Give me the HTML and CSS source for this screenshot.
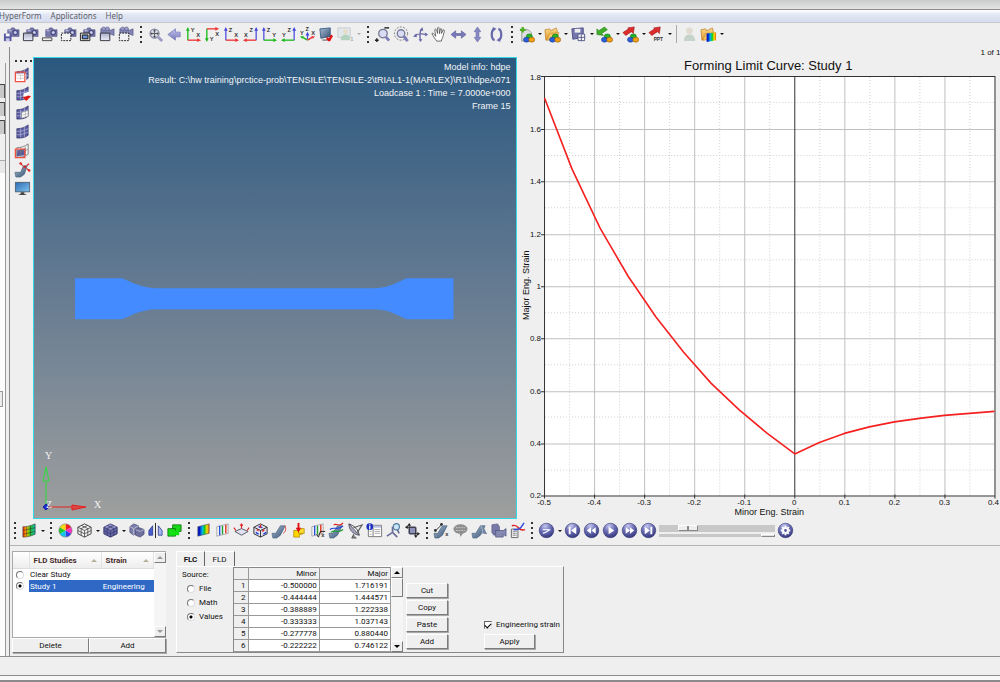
FILE: index.html
```html
<!DOCTYPE html>
<html lang="en">
<head>
<meta charset="utf-8">
<title>HyperForm</title>
<link rel="stylesheet" href="styles.css">
</head>
<body>
<svg class="sprite" aria-hidden="true">
  <defs>
    <linearGradient id="g-violet" x1="0" y1="0" x2="0" y2="1"><stop offset="0" stop-color="#c3c5ea"/><stop offset="1" stop-color="#7678bb"/></linearGradient>
    <linearGradient id="g-steel" x1="0" y1="0" x2="1" y2="1"><stop offset="0" stop-color="#a9bdd6"/><stop offset="1" stop-color="#34506f"/></linearGradient>
    <linearGradient id="g-screen" x1="0" y1="0" x2="1" y2="1"><stop offset="0" stop-color="#2f6fb4"/><stop offset="1" stop-color="#7cc0ee"/></linearGradient>
    <linearGradient id="g-rain" x1="0" y1="0" x2="1" y2="0"><stop offset=".15" stop-color="#0018c8"/><stop offset=".4" stop-color="#00b8e8"/><stop offset=".6" stop-color="#18c820"/><stop offset=".8" stop-color="#f8e000"/><stop offset="1" stop-color="#f06000"/></linearGradient>
    <linearGradient id="g-warm" x1="0" y1="0" x2="1" y2="0"><stop offset="0" stop-color="#f02000"/><stop offset=".3" stop-color="#f8c000"/><stop offset=".6" stop-color="#28c820"/><stop offset="1" stop-color="#10b8b0"/></linearGradient>
    <radialGradient id="g-ball" cx=".4" cy=".2" r=".8"><stop offset="0" stop-color="#c4c7ef"/><stop offset=".5" stop-color="#6c6fb4"/><stop offset="1" stop-color="#34377e"/></radialGradient>
    <linearGradient id="g-folder" x1="0" y1="0" x2="0" y2="1"><stop offset="0" stop-color="#fbd98a"/><stop offset="1" stop-color="#e09a2c"/></linearGradient>
    <linearGradient id="g-pane" x1="0" y1="0" x2="0" y2="1"><stop offset="0" stop-color="#a9aec6"/><stop offset="1" stop-color="#eceefa"/></linearGradient>
  </defs>
  <symbol id="cam" viewBox="0 0 18 18"><path d="M5 4h3l1-2h3l1 2h4v7H5z" fill="#7779ab" stroke="#4c4d80" stroke-width=".6"/><circle cx="13" cy="7" r="3" fill="#4b4c82"/><circle cx="13" cy="7" r="1.6" fill="#c9cbea"/><path d="M6 5h3" stroke="#d4d5ee"/></symbol>
  <symbol id="vid" viewBox="0 0 18 18"><path d="M3 3h9v2l5-2v7l-5-2v3H3z" fill="#8284b2" stroke="#55578a" stroke-width=".7"/><circle cx="6" cy="3" r="2" fill="#9a9cc6" stroke="#55578a" stroke-width=".6"/><circle cx="10" cy="3" r="2" fill="#9a9cc6" stroke="#55578a" stroke-width=".6"/></symbol>
  <symbol id="cam-save" viewBox="0 0 18 18"><use href="#cam"/><path d="M1 8h8v8H1z" fill="#5557a0"/><path d="M3 8h4v3H3z" fill="#fff"/><path d="M3 13h4v3H3z" fill="#c8c9e6"/></symbol>
  <symbol id="cam-win" viewBox="0 0 18 18"><use href="#cam"/><path d="M1.500 7.500h10v8h-10z" fill="url(#g-pane)" stroke="#33343f"/></symbol>
  <symbol id="cam-bar" viewBox="0 0 18 18"><use href="#cam"/><path d="M1.500 12.500h10v3h-10z" fill="#eee" stroke="#444"/></symbol>
  <symbol id="cam-dash" viewBox="0 0 18 18"><use href="#cam"/><path d="M1.500 7.500h10v8h-10z" fill="#f2f2f4" stroke="#222" stroke-dasharray="2 1"/></symbol>
  <symbol id="cam-full" viewBox="0 0 18 18"><use href="#cam"/><path d="M1.500 7.500h10v8h-10z" fill="#ddd" stroke="#222"/><path d="M3.500 9.500h6v4h-6z" fill="#6f93d8" stroke="#111"/></symbol>
  <symbol id="vid-win" viewBox="0 0 18 18"><use href="#vid"/><path d="M2.500 7.500h10v8h-10z" fill="url(#g-pane)" stroke="#33343f"/></symbol>
  <symbol id="vid-dash" viewBox="0 0 18 18"><use href="#vid"/><path d="M2.500 7.500h10v8h-10z" fill="#f2f2f4" stroke="#222" stroke-dasharray="2 1"/></symbol>
  <symbol id="lens" viewBox="0 0 18 18"><circle cx="8" cy="8" r="4.700" fill="#dfe0ee" stroke="#8a8ca6" stroke-width="1.500"/><path d="M12 12l4 4" stroke="#9a9bc4" stroke-width="3"/><path d="M5 8h6M8 5v6" stroke="#555"/><path d="M8 3.500l1.500 2h-3zM8 12.500l1.500-2h-3zM3.500 8l2-1.500v3zM12.500 8l-2-1.500v3z" fill="#444"/></symbol>
  <symbol id="back" viewBox="0 0 18 18"><path d="M2 9l8-6v3.500h5v5h-5V15z" fill="url(#g-violet)" stroke="#7779b8" stroke-width=".8"/></symbol>
  <symbol id="view-check" viewBox="0 0 18 18"><path d="M2 3l11-1v9L3 13z" fill="url(#g-steel)" stroke="#274a78" stroke-width=".8"/><path d="M4 14h7l-1 2H5z" fill="#999"/><path d="M9 13c2 0 2 2 3 2 1-2 2-4 3-5" fill="none" stroke="#e01010" stroke-width="2.500"/></symbol>
  <symbol id="photo" viewBox="0 0 18 18"><g opacity=".4"><path d="M1 2h13v10H1z" fill="#cfdde6" stroke="#8a9aa8"/><circle cx="9" cy="6" r="2.500" fill="#e0c080"/><path d="M4 15c0-4 2-6 5-6s5 2 5 6z" fill="#5fae7c"/></g></symbol>
  <symbol id="zoom-out" viewBox="0 0 18 18"><circle cx="9.500" cy="8" r="4.500" fill="#d9dcf2" stroke="#777a96" stroke-width="1.400"/><path d="M12.500 11.500l3.500 4" stroke="#7b7db8" stroke-width="3"/><path d="M11 2h5" stroke="#222" stroke-width="1.500"/><path d="M1 15h4M3 13v4" stroke="#222" stroke-width="1.500"/></symbol>
  <symbol id="zoom-circ" viewBox="0 0 18 18"><circle cx="8.500" cy="8" r="7" fill="none" stroke="#555" stroke-dasharray="2 1.500" stroke-width=".8"/><circle cx="8.500" cy="8" r="4" fill="#d9dcf2" stroke="#777a96" stroke-width="1.400"/><path d="M11.500 11l4 5" stroke="#7b7db8" stroke-width="3"/></symbol>
  <symbol id="rotate3" viewBox="0 0 18 18"><path d="M3 10c4-2 8-2 12-1M10 3c-2 4-2 8-1 12" fill="none" stroke="#686aa8" stroke-width="1.500"/><path d="M1 11l4-3v4zM17 9l-3-2v4zM11 1l1 4H8zM9 17l-2-3h4z" fill="#686aa8"/></symbol>
  <symbol id="hand" viewBox="0 0 18 18"><path d="M6 16c-1-2-4-5-5-8 1-1 2 0 4 3L4 4c1-2 2 0 3 4V2c1-2 2 0 2 6l1-5c1-1 2 0 1 5l2-4c2 0 1 2 0 6s-2 4-2 6z" fill="#fff" stroke="#555" stroke-width=".9"/></symbol>
  <symbol id="arr-h" viewBox="0 0 18 18"><path d="M1 9l5-4v3h6V5l5 4-5 4v-3H6v3z" fill="#7779bb" stroke="#55578f" stroke-width=".6"/></symbol>
  <symbol id="arr-v" viewBox="0 0 18 18"><path d="M9 1l3.500 5h-2v6h2L9 17l-3.500-5h2V6h-2z" fill="#8688c6" stroke="#65679f" stroke-width=".6"/></symbol>
  <symbol id="spin" viewBox="0 0 18 18"><path d="M7 3C3 4 3 14 7 15M11 15c4-1 4-11 0-12" fill="none" stroke="#686aac" stroke-width="2.400"/><path d="M5 1l4 2-4 3zM13 17l-4-2 4-3z" fill="#686aac"/></symbol>
  <symbol id="balls" viewBox="0 0 18 18"><ellipse cx="12" cy="11" rx="3.200" ry="2.600" fill="#25b425" stroke="#0a6a0a" stroke-width=".6"/><ellipse cx="9" cy="14.500" rx="3.200" ry="2.600" fill="#2a5fd8" stroke="#123a90" stroke-width=".6"/><ellipse cx="14.500" cy="14.500" rx="3.200" ry="2.600" fill="#f0a010" stroke="#905008" stroke-width=".6"/></symbol>
  <symbol id="doc-new" viewBox="0 0 18 18"><path d="M4 4h7l3 3v9H4z" fill="#dedede" stroke="#999"/><path d="M5 1v6M2 4h6" stroke="#4fae22" stroke-width="2.400"/><use href="#balls"/></symbol>
  <symbol id="fold" viewBox="0 0 18 18"><path d="M1 4l5-1 1 2 6-3 1 3v8L2 15z" fill="url(#g-folder)" stroke="#b97a1e" stroke-width=".7"/><path d="M3 15l3-7 10-1-3 7z" fill="#f7c766" stroke="#b97a1e" stroke-width=".5"/></symbol>
  <symbol id="fold-balls" viewBox="0 0 18 18"><use href="#fold"/><use href="#balls"/></symbol>
  <symbol id="fold-rain" viewBox="0 0 18 18"><use href="#fold"/><path d="M7 8l10-1v8L7 17z" fill="url(#g-rain)"/></symbol>
  <symbol id="save-grid" viewBox="0 0 18 18"><path d="M2 3l12-1v10L3 14z" fill="#7577ad" stroke="#4c4e86"/><path d="M5 3h6v4H5z" fill="#eee"/><path d="M8.500 8.500h7v7h-7z" fill="#f6f6fb" stroke="#555a88"/><path d="M12 9v7M9 12h7" stroke="#555a88"/></symbol>
  <symbol id="in-balls" viewBox="0 0 18 18"><path d="M1 9V3l2 2 6-4 3 3-6 4 2 2z" fill="#3fae28" stroke="#1c7a10" stroke-width=".6"/><use href="#balls"/></symbol>
  <symbol id="out-arrow" viewBox="0 0 18 18"><path d="M1 7l6-4-1-1 7-1-1 7-2-2-6 4z" fill="#dc2c2c" stroke="#981010" stroke-width=".6"/></symbol>
  <symbol id="out-balls" viewBox="0 0 18 18"><use href="#out-arrow"/><use href="#balls"/></symbol>
  <symbol id="person" viewBox="0 0 18 18"><g opacity=".35"><circle cx="9" cy="5" r="3.500" fill="#c7b49a"/><path d="M3 16c0-5 3-7 6-7s6 2 6 7z" fill="#7ba08a"/></g></symbol>

  <symbol id="sheet" viewBox="0 0 18 18"><path d="M3 6c4 0 8-1 12-4v11c-4 3-8 3-12 3z" fill="#5a5c9e" stroke="#2c2e68" stroke-width=".7"/><path d="M7 6v9M11 4v11M3 9c4 0 8-1 12-3M3 12.500c4 0 8-1 12-3" fill="none" stroke="#b9bae0" stroke-width=".7"/></symbol>
  <symbol id="sheet-box" viewBox="0 0 18 18"><use href="#sheet"/><path d="M2 8h11v8H2z" fill="#fff"/><path d="M1.500 6.500h10v10h-10z" fill="none" stroke="#f05040" stroke-width="1.400"/><path d="M3 10h10M3 13h10M7 8v7" stroke="#c6b4b4" stroke-width=".6"/></symbol>
  <symbol id="sheet-red" viewBox="0 0 18 18"><use href="#sheet"/><path d="M10 9l6-2v5l-6 3z" fill="#fff"/><path d="M9 13l4 4 5-5-3-1-2 1z" fill="#e01818"/></symbol>
  <symbol id="sheet-part" viewBox="0 0 18 18"><use href="#sheet"/><path d="M8 9l7-2v6l-7 2z" fill="#fff" stroke="#888" stroke-width=".6"/><path d="M12 8v6M8 12l7-2" stroke="#999" stroke-width=".6"/></symbol>
  <symbol id="sheet-frame" viewBox="0 0 18 18"><path d="M3 6c4 0 8-1 12-4v11c-4 3-8 3-12 3z" fill="#f2f2f2" stroke="#666" stroke-width=".8"/><path d="M3 9l9-2v7l-9 1z" fill="#5a5c9e"/><path d="M7 6v9M12 5v9M3 11l12-3" stroke="#777" stroke-width=".6"/><path d="M1.500 7.500h10v9h-10z" fill="none" stroke="#f05040" stroke-width="1.400"/></symbol>
  <symbol id="bend-x" viewBox="0 0 18 18"><path d="M1 12h6l3-7h4l-3 9-4 3H2z" fill="url(#g-steel)" stroke="#3c5674" stroke-width=".6"/><path d="M7 3l9 7M16 3l-7 5" stroke="#e02020" stroke-width="1.200" stroke-dasharray="3 1"/><circle cx="7" cy="2.500" r="1.300" fill="#e02020"/><circle cx="16" cy="10" r="1.300" fill="#e02020"/></symbol>
  <symbol id="monitor" viewBox="0 0 18 18"><path d="M1 2h16v11H1z" fill="#5a6a7a"/><path d="M2 3h14v9H2z" fill="url(#g-screen)"/><path d="M7 13h4v2h2v1H5v-1h2z" fill="#444"/></symbol>

  <symbol id="contour" viewBox="0 0 18 18"><path d="M2 5c5 0 8-1 13-3v11c-5 2-8 3-13 3z" fill="url(#g-warm)" stroke="#333" stroke-width=".6"/><path d="M6 5v10M10 4v10M2 9l13-3M2 13l13-3" stroke="#333" stroke-width=".6"/></symbol>
  <symbol id="wheel" viewBox="0 0 18 18"><path d="M9 9V2a7 7 0 0 1 6 3.500z" fill="#f02020"/><path d="M9 9l6-3.500a7 7 0 0 1 0 7z" fill="#ff30c0"/><path d="M9 9l6 3.500A7 7 0 0 1 9 16z" fill="#3040f0"/><path d="M9 9v7a7 7 0 0 1-6-3.500z" fill="#10c8e8"/><path d="M9 9l-6 3.500a7 7 0 0 1 0-7z" fill="#20c830"/><path d="M9 9L3 5.500A7 7 0 0 1 9 2z" fill="#f8d810"/><circle cx="9" cy="9" r="7" fill="none" stroke="#777" stroke-width=".6"/></symbol>
  <symbol id="cube-wire" viewBox="0 0 18 18"><path d="M9 2l7 3.500v7L9 16l-7-3.500v-7z" fill="#eee" stroke="#444"/><path d="M2 5.500L9 9l7-3.500M9 9v7M2 9l7 3.500L16 9M5.500 3.500l7 3.500v7M12.500 3.500l-7 3.500v7" fill="none" stroke="#444" stroke-width=".8"/></symbol>
  <symbol id="cube-solid" viewBox="0 0 18 18"><path d="M9 2l7 3.500v7L9 16l-7-3.500v-7z" fill="#6668a4" stroke="#2f3168"/><path d="M9 2l7 3.500L9 9 2 5.500z" fill="#8e90c4"/><path d="M2 5.500L9 9l7-3.500M9 9v7M2 9l7 3.500L16 9M5.500 3.500l7 3.500v7M12.500 3.500l-7 3.500v7" fill="none" stroke="#34366c" stroke-width=".7"/></symbol>
  <symbol id="blocks" viewBox="0 0 18 18"><path d="M2 5l4-3 5 2v6l-5 4-4-3z" fill="#7b7ea8" stroke="#454870" stroke-width=".7"/><path d="M8 8l4-2 5 2v5l-4 3-5-2z" fill="#6e719c" stroke="#454870" stroke-width=".7"/><path d="M2 5l4 2 5-3M6 7v7M8 8l5 2 4-2" fill="none" stroke="#c7c9e2" stroke-width=".8"/></symbol>
  <symbol id="mirror" viewBox="0 0 18 18"><path d="M2 14V9l4-5v10z" fill="#4a5fd0" stroke="#26358c" stroke-width=".8"/><path d="M16 14V9l-4-5v10z" fill="#a9b4ee" stroke="#26358c" stroke-width=".8"/><path d="M9 1v16" stroke="#222"/></symbol>
  <symbol id="green" viewBox="0 0 18 18"><path d="M7 3h9v7H7z" fill="#18d818" stroke="#086808" stroke-width=".8"/><path d="M2 7h8v8H2z" fill="#18e018" stroke="#086808" stroke-width=".8"/><path d="M8 9h6v5H8z" fill="#10e010"/></symbol>
  <symbol id="bands" viewBox="0 0 18 18"><path d="M3 5l12-3v10L3 15z" fill="url(#g-rain)" stroke="#445" stroke-width=".6"/></symbol>
  <symbol id="lines" viewBox="0 0 18 18"><path d="M3 5l12-3v10L3 15z" fill="#f7f7f7" stroke="#888" stroke-width=".7"/><path d="M6 4v10" stroke="#2a50e0" stroke-width="1.500"/><path d="M9 4v9" stroke="#20a030" stroke-width="1.500"/><path d="M12.500 3v9" stroke="#e03020" stroke-width="1.500"/></symbol>
  <symbol id="plane" viewBox="0 0 18 18"><path d="M2 10l7-3 7 3-7 4z" fill="#dfe2ee" stroke="#556"/><path d="M9 7V3M3 9L1 6M15 9l2-3" stroke="#e02020" stroke-width="1.200"/><path d="M9 1l2 3H7z" fill="#e02020"/></symbol>
  <symbol id="cube-arrows" viewBox="0 0 18 18"><path d="M9 2l7 3.500v7L9 16l-7-3.500v-7z" fill="#e0e2ee" stroke="#333"/><path d="M2 5.500L9 9l7-3.500M9 9v7" fill="none" stroke="#333"/><path d="M4 11l3 2M12 13l3-2M7 5l4 1" stroke="#2038e0" stroke-width="1.500"/><path d="M5 8l2 1M13 8l-2 2M9 3v3" stroke="#e02020" stroke-width="1.500"/></symbol>
  <symbol id="bend" viewBox="0 0 18 18"><path d="M1 12h4l5-8h5l-5 10-4 3H2z" fill="url(#g-steel)" stroke="#3c5674" stroke-width=".6"/></symbol>
  <symbol id="bend-red" viewBox="0 0 18 18"><use href="#bend"/><path d="M13 12c3-2 3-5 2-8" fill="none" stroke="#e04040"/></symbol>
  <symbol id="drop" viewBox="0 0 18 18"><path d="M4 9h9v4h-3v3H4z" fill="#ffd800" stroke="#b08800" stroke-width=".8"/><path d="M9 7h6v5H9z" fill="#ffe030" stroke="#b08800" stroke-width=".8"/><path d="M9 1v6" stroke="#e01010" stroke-width="2"/><path d="M9 11L6 6h6z" fill="#e01010"/></symbol>
  <symbol id="lines-root" viewBox="0 0 18 18"><use href="#lines"/><path d="M8 13l2 3 2-6h5" fill="none" stroke="#222"/></symbol>
  <symbol id="bend-flow" viewBox="0 0 18 18"><use href="#bend"/><path d="M2 8c5-4 8 2 14-4" fill="none" stroke="#2040e0" stroke-width="1.200"/><path d="M3 11c5-4 7 2 13-3" fill="none" stroke="#18a030" stroke-width="1.200"/><path d="M6 3c4-2 6 3 10-2" fill="none" stroke="#e02020" stroke-width="1.200"/></symbol>
  <symbol id="dish" viewBox="0 0 18 18"><path d="M2 2c0 6 4 11 11 12z" fill="#a6a8ba" stroke="#555770"/><path d="M2 2c6 2 10 6 11 12" fill="none" stroke="#444"/><path d="M7 6l9-3-5 8" fill="none" stroke="#555" stroke-width="1.100"/><path d="M7 13l-2 4h5" stroke="#555" fill="#888"/></symbol>
  <symbol id="info" viewBox="0 0 18 18"><path d="M2.500 3.500h14v12h-14z" fill="#fff" stroke="#777"/><path d="M6 4h10v2H6z" fill="#b9c0e6"/><path d="M9 8h6M9 10h6M9 12h6M4 10h2M4 13h2" stroke="#aaa"/><path d="M7.500 6v9" stroke="#777"/><circle cx="4" cy="5" r="3.600" fill="#1c30c0"/><path d="M4 4v4M4 2.500v1" stroke="#fff" stroke-width="1.300"/></symbol>
  <symbol id="tracer" viewBox="0 0 18 18"><circle cx="12" cy="5" r="3.300" fill="#c8e6f6" stroke="#4f7c9c" stroke-width="1.200"/><path d="M8 5v6M8 11l-6 4M8 11l5 5M13 8l2 4" stroke="#6b6e9c" stroke-width="1.800" fill="none"/></symbol>
  <symbol id="measure" viewBox="0 0 18 18"><path d="M5.500 5.500h7v7h-7z" fill="#8f93bc" stroke="#444a70"/><path d="M5.500 12V3M6 12.500h9M12.500 15V6M3 5.500h9" stroke="#222" stroke-width=".9"/><path d="M5.500 1l2 3h-4zM17 12.500l-3-2v4zM12.500 17l-2-3h4zM1 5.500l3-2v4z" fill="#222"/></symbol>
  <symbol id="bend-k" viewBox="0 0 18 18"><use href="#bend"/><path d="M3 9l6-6" stroke="#333"/><circle cx="9" cy="2.500" r="1.500" fill="#333"/><circle cx="2.500" cy="9" r="1.500" fill="#333"/></symbol>
  <symbol id="note" viewBox="0 0 18 18"><ellipse cx="9" cy="7.500" rx="7.500" ry="5" fill="#8e8e8e"/><path d="M8 12l1 4 3-5z" fill="#8e8e8e"/><path d="M4 6h10M4 9h10" stroke="#ccc" stroke-dasharray="2 1"/></symbol>
  <symbol id="bend-fan" viewBox="0 0 18 18"><use href="#bend"/><path d="M12 3l5 10-6-1z" fill="#6d7f9c"/><path d="M11 4l2 9" stroke="#b9c6da" stroke-width=".8"/></symbol>
  <symbol id="vid-block" viewBox="0 0 18 18"><path d="M2 3l6-1 2 3v8l-6 1-2-3z" fill="#777aa8" stroke="#484b78" stroke-width=".6"/><path d="M6 9h8l3-2v8l-3-2v3H6z" fill="#8689b2" stroke="#484b78" stroke-width=".7"/></symbol>
  <symbol id="curve-doc" viewBox="0 0 18 18"><path d="M2.500 7.500h7v9h-7z" fill="#eee" stroke="#666"/><path d="M4 10h4M4 12h4M4 14h4" stroke="#666" stroke-dasharray="1 .500"/><path d="M3 4c8-3 6 7 14 4" fill="none" stroke="#e02020" stroke-width="1.500"/><path d="M5 8c7 1 8-3 11-7" fill="none" stroke="#2a48e0" stroke-width="1.500"/></symbol>

  <symbol id="ball" viewBox="0 0 18 18"><circle cx="9" cy="9" r="7.700" fill="url(#g-ball)" stroke="#34366f" stroke-width=".6"/></symbol>
  <symbol id="p-mode" viewBox="0 0 18 18"><use href="#ball"/><path d="M5 8h8M5 12l3-1 5-3" fill="none" stroke="#e8e9fb" stroke-width="1.300"/></symbol>
  <symbol id="p-first" viewBox="0 0 18 18"><use href="#ball"/><path d="M5 5h2v8H5zM13 5v8L7.500 9z" fill="#fff"/></symbol>
  <symbol id="p-rew" viewBox="0 0 18 18"><use href="#ball"/><path d="M8.500 5.500v7L4 9zM13.500 5.500v7L9 9z" fill="#fff"/></symbol>
  <symbol id="p-play" viewBox="0 0 18 18"><use href="#ball"/><path d="M7 5l6 4-6 4z" fill="#fff"/></symbol>
  <symbol id="p-fwd" viewBox="0 0 18 18"><use href="#ball"/><path d="M5 5.500v7L9.500 9zM9.500 5.500v7L14 9z" fill="#fff"/></symbol>
  <symbol id="p-last" viewBox="0 0 18 18"><use href="#ball"/><path d="M11 5h2v8h-2zM5 5v8l5.500-4z" fill="#fff"/></symbol>
  <symbol id="p-gear" viewBox="0 0 18 18"><use href="#ball"/><path d="M9 4v10M4 9h10M5.500 5.500l7 7M12.500 5.500l-7 7" stroke="#fff" stroke-width="2"/><circle cx="9" cy="9" r="3.500" fill="#fff"/><circle cx="9" cy="9" r="1.500" fill="#5557a0"/></symbol>
</svg>

<div class="title-strip"></div>
<nav class="menu-bar">
  <a href="#hyperform">HyperForm</a>
  <a href="#applications">Applications</a>
  <a href="#help">Help</a>
</nav>

<div class="toolbar toolbar-top" role="toolbar" aria-label="Standard">
  <div class="group">
    <button class="tool" aria-label="Save image"><svg><use href="#cam-save"/></svg></button>
    <button class="tool" aria-label="Capture window"><svg><use href="#cam-win"/></svg></button>
    <button class="tool" aria-label="Capture panel"><svg><use href="#cam-bar"/></svg></button>
    <button class="tool" aria-label="Capture area"><svg><use href="#cam-dash"/></svg></button>
    <button class="tool" aria-label="Capture client"><svg><use href="#cam-full"/></svg></button>
    <button class="tool" aria-label="Record window"><svg><use href="#vid-win"/></svg></button>
    <button class="tool" aria-label="Record area"><svg><use href="#vid-dash"/></svg></button>
  </div>
  <i class="grip"></i>
  <div class="group">
    <button class="tool" aria-label="Fit"><svg><use href="#lens"/></svg></button>
    <button class="tool" aria-label="Previous view"><svg><use href="#back"/></svg></button>
    <button class="tool" aria-label="XY top"><svg viewBox="0 0 18 18"><path d="M3 15V4" class="g"/><path d="M3 1l2 4H1z" class="gf"/><path d="M3 15h11" class="r"/><path d="M17 15l-4-2v4z" class="rf"/><text x="6" y="6" class="glyph">Y</text><text x="12" y="12" class="glyph">X</text></svg></button>
    <button class="tool" aria-label="XY bottom"><svg viewBox="0 0 18 18"><path d="M3 3v11" class="g"/><path d="M3 17l2-4H1z" class="gf"/><path d="M3 3h10" class="r"/><path d="M16 3l-4-2v4z" class="rf"/><text x="12" y="11" class="glyph">X</text><text x="6" y="16" class="glyph">Y</text></svg></button>
    <button class="tool" aria-label="XZ left"><svg viewBox="0 0 18 18"><path d="M3 15V4" class="b"/><path d="M3 1l2 4H1z" class="bf"/><path d="M3 15h11" class="r"/><path d="M17 15l-4-2v4z" class="rf"/><text x="6" y="6" class="glyph">Z</text><text x="12" y="12" class="glyph">X</text></svg></button>
    <button class="tool" aria-label="XZ right"><svg viewBox="0 0 18 18"><path d="M15 15V4" class="b"/><path d="M15 1l2 4h-4z" class="bf"/><path d="M15 15H4" class="r"/><path d="M1 15l4-2v4z" class="rf"/><text x="8" y="6" class="glyph">Z</text><text x="2" y="12" class="glyph">X</text></svg></button>
    <button class="tool" aria-label="YZ rear"><svg viewBox="0 0 18 18"><path d="M3 15V4" class="b"/><path d="M3 1l2 4H1z" class="bf"/><path d="M3 15h11" class="g"/><path d="M17 15l-4-2v4z" class="gf"/><text x="6" y="6" class="glyph">Z</text><text x="12" y="12" class="glyph">Y</text></svg></button>
    <button class="tool" aria-label="YZ front"><svg viewBox="0 0 18 18"><path d="M15 15V4" class="b"/><path d="M15 1l2 4h-4z" class="bf"/><path d="M15 15H4" class="g"/><path d="M1 15l4-2v4z" class="gf"/><text x="8" y="6" class="glyph">Z</text><text x="2" y="12" class="glyph">Y</text></svg></button>
    <button class="tool" aria-label="Isometric"><svg viewBox="0 0 18 18"><path d="M9 14V9" class="b"/><path d="M9 6l2 4H7z" class="bf"/><path d="M9 15l-5-3" class="g"/><path d="M1 11l4-.500-1.500 3z" class="gf"/><path d="M9 15l5-3" class="r"/><path d="M17 11l-4-.500 1.500 3z" class="rf"/><text x="7" y="5" class="glyph">Z</text><text x="1" y="9" class="glyph">Y</text><text x="13" y="9" class="glyph">X</text></svg></button>
    <button class="tool" aria-label="Saved view"><svg><use href="#view-check"/></svg></button>
    <button class="tool" aria-label="User view"><svg viewBox="0 0 18 18"><use href="#photo"/><text x="14" y="16" class="glyph faint">1</text></svg></button>
    <button class="caret dim" aria-label="User view options"></button>
  </div>
  <i class="grip"></i>
  <div class="group">
    <button class="tool" aria-label="Zoom"><svg><use href="#zoom-out"/></svg></button>
    <button class="tool" aria-label="Circle zoom"><svg><use href="#zoom-circ"/></svg></button>
    <button class="tool" aria-label="Rotate"><svg><use href="#rotate3"/></svg></button>
    <button class="tool" aria-label="Pan"><svg><use href="#hand"/></svg></button>
    <button class="tool" aria-label="Rotate horizontally"><svg><use href="#arr-h"/></svg></button>
    <button class="tool" aria-label="Rotate vertically"><svg><use href="#arr-v"/></svg></button>
    <button class="tool" aria-label="Spin"><svg><use href="#spin"/></svg></button>
  </div>
  <i class="grip"></i>
  <div class="group">
    <button class="tool" aria-label="New session"><svg><use href="#doc-new"/></svg></button><button class="caret" aria-label="New options"></button>
    <button class="tool" aria-label="Open session"><svg><use href="#fold-balls"/></svg></button><button class="caret" aria-label="Open options"></button>
    <button class="tool" aria-label="Save"><svg><use href="#save-grid"/></svg></button><button class="caret" aria-label="Save options"></button>
    <button class="tool" aria-label="Import"><svg><use href="#in-balls"/></svg></button><button class="caret" aria-label="Import options"></button>
    <button class="tool" aria-label="Export"><svg><use href="#out-balls"/></svg></button><button class="caret" aria-label="Export options"></button>
    <button class="tool" aria-label="Publish to PPT"><svg viewBox="0 0 18 18"><use href="#out-arrow"/><text x="6" y="16" class="glyph tiny">PPT</text></svg></button><button class="caret" aria-label="Publish options"></button>
  </div>
  <i class="divider"></i>
  <div class="group">
    <button class="tool" aria-label="User profile"><svg><use href="#person"/></svg></button>
    <button class="tool" aria-label="Open results"><svg><use href="#fold-rain"/></svg></button><button class="caret" aria-label="Results options"></button>
  </div>
</div>

<main class="workspace">
  <aside class="dock">
    <div class="dock-strip">
      <i class="stub"></i><i class="stub"></i><i class="stub"></i>
      <div class="dock-list"><i class="dock-thumb"></i></div>
    </div>
  </aside>

  <div class="content">
    <section class="views">
      <div class="side-tools" role="toolbar" aria-label="Display">
        <i class="grip-h"></i>
        <button class="tool" aria-label="Mask"><svg><use href="#sheet-box"/></svg></button>
        <button class="tool" aria-label="Reverse mask"><svg><use href="#sheet-red"/></svg></button>
        <button class="tool" aria-label="Unmask adjacent"><svg><use href="#sheet-part"/></svg></button>
        <button class="tool" aria-label="Unmask all"><svg><use href="#sheet"/></svg></button>
        <button class="tool" aria-label="Mask outside view"><svg><use href="#sheet-frame"/></svg></button>
        <button class="tool" aria-label="Find"><svg><use href="#bend-x"/></svg></button>
        <button class="tool" aria-label="Display"><svg><use href="#monitor"/></svg></button>
      </div>

      <div class="viewport">
        <div class="model-info">
          <p>Model info: hdpe</p>
          <p>Result: C:\hw training\prctice-prob\TENSILE\TENSILE-2\tRIAL1-1(MARLEX)\R1\hdpeA071</p>
          <p>Loadcase 1 : Time = 7.0000e+000</p>
          <p>Frame 15</p>
        </div>
        <svg class="scene" viewBox="34 58 482 460" role="img" aria-label="Tensile specimen">
          <path d="M75 278h47c10 4 18 9 33 10h221c14-1 20-5 31-10h47v41h-47c-11-5-17-9-31-10H155c-15 1-23 6-33 10H75z" fill="#448bff"/>
          <path d="M46 506V482" stroke="#28e038"/>
          <path d="M46 467l3 14h-6z" fill="none" stroke="#28e038"/>
          <path d="M46 507h26" stroke="#e82020"/>
          <path d="M72 505l14 2-14 3z" fill="#d84848" stroke="#e82020"/>
          <path d="M46 504l3 3-3 3-3-3z" fill="#2030d0" stroke="#1018a0"/>
          <text x="45" y="459" class="axis-name">Y</text>
          <text x="94" y="508" class="axis-name">X</text>
          <text x="46" y="508" class="axis-name">Z</text>
        </svg>
      </div>

      <div class="plot">
        <svg class="chart" viewBox="517 47 483 472" role="img" aria-label="Forming Limit Curve: Study 1">
          <path d="M544 76h450v420H544z" fill="#fff"/>
          <path d="M569.500 77v418M619.500 77v418M669.500 77v418M719.500 77v418M769.500 77v418M819.500 77v418M869.500 77v418M919.500 77v418M969.500 77v418M545 102.500h449M545 155.500h449M545 207.500h449M545 259.500h449M545 312.500h449M545 364.500h449M545 416.500h449M545 469.500h449" stroke="#d0d0d0" stroke-dasharray="1 2"/>
          <path d="M594.500 77v418M644.500 77v418M694.500 77v418M744.500 77v418M844.500 77v418M894.500 77v418M944.500 77v418M545 129.500h449M545 181.500h449M545 234.500h449M545 286.500h449M545 338.500h449M545 391.500h449M545 443.500h449" stroke="#c0c0c0"/>
          <path d="M541 76.500h453.500M541 495.500h453.500M544.500 76v422M994.500 76v422M794.500 76v422" stroke="#333" fill="none"/>
          <path d="M541 129.500h4M541 181.500h4M541 234.500h4M541 286.500h4M541 338.500h4M541 391.500h4M541 443.500h4M594.500 494v4M644.500 494v4M694.500 494v4M744.500 494v4M844.500 494v4M894.500 494v4M944.500 494v4" stroke="#333"/>
          <path d="M544.500 98L572 169L600 228L628 276L656 317L683.500 352L711 383L739 409.500L767 433L794.500 453.500L819 442L844 433L869 426.500L894 421.500L919 418L944 415L969 413L994 411" fill="none" stroke="#f52020" stroke-width="1.600" stroke-linejoin="round"/>
          <text x="768" y="70" class="chart-title">Forming Limit Curve: Study 1</text>
          <text x="1000" y="55" class="pages">1 of 1</text>
          <g class="ticks-y">
            <text x="541" y="80">1.8</text><text x="541" y="132">1.6</text><text x="541" y="184">1.4</text>
            <text x="541" y="237">1.2</text><text x="541" y="289">1</text><text x="541" y="341">0.8</text>
            <text x="541" y="394">0.6</text><text x="541" y="446">0.4</text><text x="541" y="498">0.2</text>
          </g>
          <g class="ticks-x">
            <text x="544" y="505">-0.5</text><text x="594" y="505">-0.4</text><text x="644" y="505">-0.3</text>
            <text x="694" y="505">-0.2</text><text x="744" y="505">-0.1</text><text x="794" y="505">0</text>
            <text x="844" y="505">0.1</text><text x="894" y="505">0.2</text><text x="944" y="505">0.3</text><text x="993" y="505">0.4</text>
          </g>
          <text x="769" y="515" class="axis-title">Minor Eng. Strain</text>
          <text x="529" y="285" class="axis-title" transform="rotate(-90 529 285)">Major Eng. Strain</text>
        </svg>
      </div>
    </section>

    <div class="toolbar toolbar-bottom" role="toolbar" aria-label="Results">
      <i class="grip"></i>
      <div class="group">
        <button class="tool" aria-label="Result type"><svg><use href="#contour"/></svg></button><button class="caret" aria-label="Result type options"></button>
      </div>
      <i class="grip"></i>
      <div class="group">
        <button class="tool" aria-label="Entity attributes"><svg><use href="#wheel"/></svg></button>
        <button class="tool" aria-label="Wireframe"><svg><use href="#cube-wire"/></svg></button><button class="caret" aria-label="Wireframe options"></button>
        <button class="tool" aria-label="Shaded"><svg><use href="#cube-solid"/></svg></button><button class="caret" aria-label="Shaded options"></button>
        <button class="tool" aria-label="Section cut"><svg><use href="#blocks"/></svg></button>
        <button class="tool" aria-label="Symmetry"><svg><use href="#mirror"/></svg></button>
        <button class="tool" aria-label="Exploded view"><svg><use href="#green"/></svg></button>
      </div>
      <i class="grip"></i>
      <div class="group">
        <button class="tool" aria-label="Contour"><svg><use href="#bands"/></svg></button>
        <button class="tool" aria-label="Iso"><svg><use href="#lines"/></svg></button>
        <button class="tool" aria-label="Vector"><svg><use href="#plane"/></svg></button>
        <button class="tool" aria-label="Tensor"><svg><use href="#cube-arrows"/></svg></button>
        <button class="tool" aria-label="Deformed"><svg><use href="#bend-red"/></svg></button>
        <button class="tool" aria-label="Loads"><svg><use href="#drop"/></svg></button>
        <button class="tool" aria-label="Derived results"><svg viewBox="0 0 18 18"><use href="#lines-root"/><text x="13" y="16" class="glyph">x</text></svg></button>
        <button class="tool" aria-label="Streamlines"><svg><use href="#bend-flow"/></svg></button>
        <button class="tool" aria-label="Tracking"><svg><use href="#dish"/></svg></button>
        <button class="tool" aria-label="Query"><svg><use href="#info"/></svg></button>
        <button class="tool" aria-label="Tracing"><svg><use href="#tracer"/></svg></button>
        <button class="tool" aria-label="Measure"><svg><use href="#measure"/></svg></button>
      </div>
      <i class="grip"></i>
      <div class="group">
        <button class="tool" aria-label="FLD"><svg viewBox="0 0 18 18"><use href="#bend-k"/><text x="13" y="15" class="glyph">x</text></svg></button>
        <button class="tool" aria-label="Notes"><svg><use href="#note"/></svg></button>
        <button class="tool" aria-label="Springback"><svg><use href="#bend-fan"/></svg></button>
        <button class="tool" aria-label="Animate parts"><svg><use href="#vid-block"/></svg></button>
        <button class="tool" aria-label="Build plots"><svg><use href="#curve-doc"/></svg></button>
      </div>
      <i class="grip"></i>
      <div class="group">
        <button class="tool" aria-label="Animation mode"><svg><use href="#p-mode"/></svg></button><button class="caret" aria-label="Animation options"></button>
        <button class="tool" aria-label="First frame"><svg><use href="#p-first"/></svg></button>
        <button class="tool" aria-label="Step back"><svg><use href="#p-rew"/></svg></button>
        <button class="tool" aria-label="Play"><svg><use href="#p-play"/></svg></button>
        <button class="tool" aria-label="Step forward"><svg><use href="#p-fwd"/></svg></button>
        <button class="tool" aria-label="Last frame"><svg><use href="#p-last"/></svg></button>
      </div>
      <div class="sliders">
        <input class="slider frame-slider" type="range" min="0" max="100" value="20" aria-label="Frame">
        <input class="slider speed-slider" type="range" min="0" max="100" value="100" aria-label="Speed">
      </div>
      <button class="tool" aria-label="Animation controls"><svg><use href="#p-gear"/></svg></button>
    </div>

    <section class="panel">
      <div class="studies">
        <div class="study-box">
          <table class="study-list">
            <thead><tr><th class="pick"></th><th>FLD Studies<i class="sort"></i></th><th>Strain<i class="sort"></i></th></tr></thead>
            <tbody>
              <tr><td class="pick"><input type="radio" name="study" id="s0"></td><td><label for="s0">Clear Study</label></td><td></td></tr>
              <tr class="selected"><td class="pick"><input type="radio" name="study" id="s1" checked></td><td><label for="s1">Study 1</label></td><td class="mid">Engineering</td></tr>
            </tbody>
          </table>
          <div class="scrollbar dim"><button class="up" aria-label="Scroll up"></button><span class="track"></span><button class="down" aria-label="Scroll down"></button></div>
        </div>
        <div class="study-actions"><button class="btn">Delete</button><button class="btn">Add</button></div>
      </div>

      <div class="tabs">
        <div class="tab-row" role="tablist"><button class="tab active" role="tab" aria-selected="true">FLC</button><button class="tab" role="tab" aria-selected="false">FLD</button></div>
        <div class="tab-body">
          <fieldset class="source">
            <legend>Source:</legend>
            <label><input type="radio" name="src">File</label>
            <label><input type="radio" name="src">Math</label>
            <label><input type="radio" name="src" checked>Values</label>
          </fieldset>
          <div class="value-box">
            <table class="values">
              <thead><tr><th class="num"></th><th>Minor</th><th>Major</th></tr></thead>
              <tbody>
                <tr><th class="num">1</th><td>-0.500000</td><td>1.716191</td></tr>
                <tr><th class="num">2</th><td>-0.444444</td><td>1.444571</td></tr>
                <tr><th class="num">3</th><td>-0.388889</td><td>1.222338</td></tr>
                <tr><th class="num">4</th><td>-0.333333</td><td>1.037143</td></tr>
                <tr><th class="num">5</th><td>-0.277778</td><td>0.880440</td></tr>
                <tr><th class="num">6</th><td>-0.222222</td><td>0.746122</td></tr>
              </tbody>
            </table>
            <div class="scrollbar"><button class="up" aria-label="Scroll up"></button><span class="thumb"></span><span class="track"></span><button class="down" aria-label="Scroll down"></button></div>
          </div>
          <div class="edit-actions">
            <button class="btn">Cut</button><button class="btn">Copy</button><button class="btn">Paste</button><button class="btn">Add</button>
          </div>
          <div class="apply-box">
            <label><input type="checkbox" checked>Engineering strain</label>
            <button class="btn">Apply</button>
          </div>
        </div>
      </div>
    </section>
  </div>
</main>

<footer class="status-bar"></footer>
</body>
</html>
```

FILE: styles.css
```css
* { box-sizing: border-box; }

:root {
  --ui: Roboto, sans-serif;
  --plot: "Liberation Sans", Arial, sans-serif;
  --face: #efefef;
  --shade: #7c7c7c;
}

body {
  margin: 0;
  min-height: 100vh;
  display: flex;
  flex-direction: column;
  background: var(--face);
  color: #111;
  font-family: var(--ui);
  font-size: 8px;
  line-height: 11px;
  overflow-x: hidden;
}

button, input { font: inherit; color: inherit; margin: 0; }
button { padding: 0; border: 0; background: none; }
p { margin: 0; }
table { border-collapse: collapse; }

.sprite { position: absolute; width: 0; height: 0; }
.glyph { font: bold 6px "Liberation Sans", sans-serif; fill: #333; }
.glyph.tiny { font-size: 5px; }
.glyph.faint { fill: #aaa; }
.r, .g, .b { fill: none; stroke-width: 1.400; }
.r { stroke: #e33; }
.g { stroke: #1cb81c; }
.b { stroke: #55d; }
.rf { fill: #e33; }
.gf { fill: #1cb81c; }
.bf { fill: #44d; }

/* Window frame and menu */
.title-strip {
  height: 10px;
  background: linear-gradient(#c9cccb, #e4e4e4);
  border-bottom: 1px solid #8c8c8c;
}
.menu-bar {
  display: flex;
  gap: 9px;
  height: 13px;
  border-bottom: 1px solid #c8cad2;
  background: linear-gradient(#fff, #e3e8f5 35%, #d6dcee);
  font-family: "Noto Sans", "Open Sans", sans-serif;
  line-height: 12px;
}
.menu-bar a { color: #5c5f68; text-decoration: none; }
.menu-bar a:first-child { margin-left: -1px; }

/* Toolbars */
.toolbar { display: flex; align-items: center; flex: none; }
.toolbar-top { height: 24px; padding: 0 0 2px 2px; }
.toolbar-bottom { height: 27px; padding-bottom: 3px; border-bottom: 1px solid #b4b4b4; }
.group { display: flex; align-items: center; }
.tool { width: 19px; height: 19px; display: grid; place-items: center; flex: none; }
.tool svg { width: 17px; height: 17px; display: block; }
.caret { width: 7px; height: 19px; display: grid; place-items: center; }
.caret::before { content: ""; border: 2px solid transparent; border-top-color: #111; border-bottom: 0; }
.caret.dim::before { border-top-color: #aaa; }
.grip {
  width: 2px;
  height: 17px;
  margin: 0 4px 0 5px;
  background: repeating-linear-gradient(#333 0 2px, transparent 2px 5px);
}
.toolbar-bottom .grip { margin-left: 4px; }
.divider { width: 1px; height: 18px; margin: 0 3px; background: #aaa; }

.sliders { width: 116px; display: flex; flex-direction: column; gap: 2px; margin: 0 1px; }
.slider { appearance: none; width: 100%; background: #c8c8c8; display: block; }
.frame-slider { height: 7px; }
.speed-slider { height: 3px; }
.slider::-webkit-slider-thumb {
  appearance: none;
  width: 20px;
  height: 6px;
  border: 1px solid #888;
  border-left-color: #fff;
  border-top-color: #fff;
  background: linear-gradient(90deg, #eee 45%, #888 45% 55%, #eee 55%);
}
.speed-slider::-webkit-slider-thumb { width: 14px; height: 3px; background: #ddd; }

/* Work area */
.workspace { flex: 1; display: flex; border-bottom: 1px solid #8e8e8e; }
.dock { width: 10px; flex: none; display: flex; padding-top: 16px; border-right: 1px solid #888; }
.dock-strip { width: 6px; display: flex; flex-direction: column; border-right: 1px solid #999; padding-top: 21px; }
.stub { height: 14px; margin-bottom: 4px; background: #c9c9c9; border-top: 1px solid #444; border-right: 1px solid #555; }
.dock-list { flex: 1; margin-top: 22px; padding-top: 230px; background: linear-gradient(#e8e8e8 12px, #fcfcfc 12px); border-top: 1px solid #aaa; }
.dock-thumb { display: block; width: 3px; height: 16px; background: #ececec; border: 1px solid #999; border-left: 0; }

.content { flex: 1; min-width: 0; display: flex; flex-direction: column; }
.views { flex: 1; display: grid; grid-template-columns: 23px minmax(0, 1fr) minmax(0, 1fr); }
.side-tools { display: flex; flex-direction: column; align-items: flex-end; padding: 13px 1px 0 0; }
.grip-h { width: 17px; height: 2px; margin-bottom: 3px; background: repeating-linear-gradient(90deg, #333 0 2px, transparent 2px 5px); }

.viewport {
  margin-top: 10px;
  display: grid;
  border: 1px solid #34d8e4;
  background: linear-gradient(#2b587f, #5f7790 45%, #9e9f9e);
  color: #f2f4f6;
  font-family: var(--plot);
  font-size: 9px;
  line-height: 13px;
}
.model-info { grid-area: 1 / 1; text-align: right; padding: 3px 5px 0 0; }
.scene { grid-area: 1 / 1; width: 100%; height: 100%; min-height: 0; display: block; }
.axis-name { font: 10px "Liberation Serif", serif; fill: #f4f4f4; }

.plot { display: grid; min-height: 0; }
.chart { width: 100%; height: 100%; display: block; font: 8px var(--plot); fill: #111; }
.chart-title { font-size: 13px; text-anchor: middle; }
.axis-title { font-size: 9px; text-anchor: middle; }
.pages { text-anchor: end; }
.ticks-y { text-anchor: end; }
.ticks-x { text-anchor: middle; }

/* Lower panel */
.panel { display: flex; gap: 10px; padding: 5px 3px 3px 2px; align-items: stretch; }
.btn {
  min-height: 15px;
  border: 1px solid #fff;
  border-right-color: var(--shade);
  border-bottom-color: var(--shade);
  background: var(--face);
  box-shadow: 1px 1px 0 #a8a8a8;
  line-height: 13px;
}

input[type="radio"] {
  appearance: none;
  flex: none;
  width: 8px;
  height: 8px;
  border: 1px solid #777;
  border-right-color: #ddd;
  border-bottom-color: #ddd;
  border-radius: 50%;
  background: #fff;
}
input[type="radio"]:checked { background: radial-gradient(#000 0 1px, #fff 2px); }
input[type="checkbox"] {
  appearance: none;
  flex: none;
  width: 8px;
  height: 8px;
  border: 1px solid #666;
  border-right-color: #ddd;
  border-bottom-color: #ddd;
  background: #fff;
  display: grid;
  place-items: center;
}
input[type="checkbox"]:checked::before {
  content: "";
  width: 5px;
  height: 3px;
  border: solid #000;
  border-width: 0 0 1px 1px;
  rotate: -45deg;
}

.studies { width: 154px; flex: none; display: flex; flex-direction: column; }
.study-box { flex: 1; display: flex; background: #fff; border: 1px solid #aaa; border-right: 0; }
.study-list { flex: 1; align-self: flex-start; table-layout: fixed; }
.study-list th, .study-list td { padding: 0; height: 12px; text-align: left; }
.study-list th {
  height: 16px;
  padding-left: 4px;
  background: linear-gradient(#fff, #ededed);
  border-right: 1px solid #e2e2e2;
  border-bottom: 1px solid #ddd;
  color: #4a2c2c;
  font-weight: bold;
}
.study-list td { padding-left: 1px; }
.study-list .pick { width: 16px; padding-left: 3px; }
.study-list th:nth-child(2) { width: 72px; }
.study-list .pick input { display: block; }
.selected td:not(.pick) { background: #2f68c5; color: #fff; }
.study-list .mid { text-align: center; padding-right: 8px; }
.sort { float: right; margin: 4px 4px 0 0; border: 3px solid transparent; border-bottom: 3px solid #b5b09a; border-top: 0; }
.study-actions { display: grid; grid-template-columns: 1fr 1fr; }

.scrollbar { width: 12px; flex: none; display: flex; flex-direction: column; background: #f5f5f5; }
.scrollbar button, .thumb {
  height: 11px;
  display: grid;
  place-items: center;
  background: var(--face);
  border: 1px solid #fff;
  border-right-color: var(--shade);
  border-bottom-color: var(--shade);
}
.scrollbar .thumb { height: 19px; }
.track { flex: 1; }
.up::before { content: ""; border: 3px solid transparent; border-bottom-color: #000; border-top: 0; }
.down::before { content: ""; border: 3px solid transparent; border-top-color: #000; border-bottom: 0; }
.dim .up::before { border-bottom-color: #999; }
.dim .down::before { border-top-color: #999; }

.tabs { flex: none; display: flex; flex-direction: column; }
.tab-row { display: flex; }
.tab { width: 30px; height: 15px; border-top: 1px solid #fff; border-right: 1px solid #666; }
.tab.active { width: 29px; font-weight: bold; border-left: 1px solid #fff; }
.tab-body {
  flex: 1;
  display: flex;
  border: 1px solid #fff;
  border-right-color: #888;
  border-bottom-color: #888;
}
.source { width: 56px; margin: 0; padding: 2px 0 0 5px; border: 0; display: flex; flex-direction: column; gap: 3px; flex: none; }
.source legend { padding: 0; float: left; }
.source label, .apply-box label { display: flex; align-items: center; gap: 4px; }
.source label { padding-left: 5px; }
.value-box { display: flex; flex: none; border-left: 1px solid #888; align-self: flex-start; }
.values { width: 157px; table-layout: fixed; }
.values th, .values td { height: 12px; padding: 0 2px; line-height: 11px; text-align: right; font-weight: normal; border-right: 1px solid #999; border-bottom: 1px solid #999; }
.values thead th { border-top: 1px solid #888; }
.values td { background: #fff; }
.values th { background: var(--face); }
.values .num { width: 14px; }
.edit-actions { display: flex; flex-direction: column; justify-content: flex-end; gap: 2px; width: 42px; margin-left: 3px; padding-bottom: 3px; flex: none; }
.apply-box { padding: 0 3px 3px 36px; display: flex; flex-direction: column; align-items: flex-start; justify-content: flex-end; gap: 4px; }
.apply-box .btn { width: 51px; }
.apply-box label { white-space: nowrap; }

.status-bar {
  flex: none;
  height: 25px;
  border-bottom: 2px solid #8a8a8a;
  background: linear-gradient(var(--face) 18px, #8c8c8c 18px 19px, #f8f8f8 19px);
}
```
